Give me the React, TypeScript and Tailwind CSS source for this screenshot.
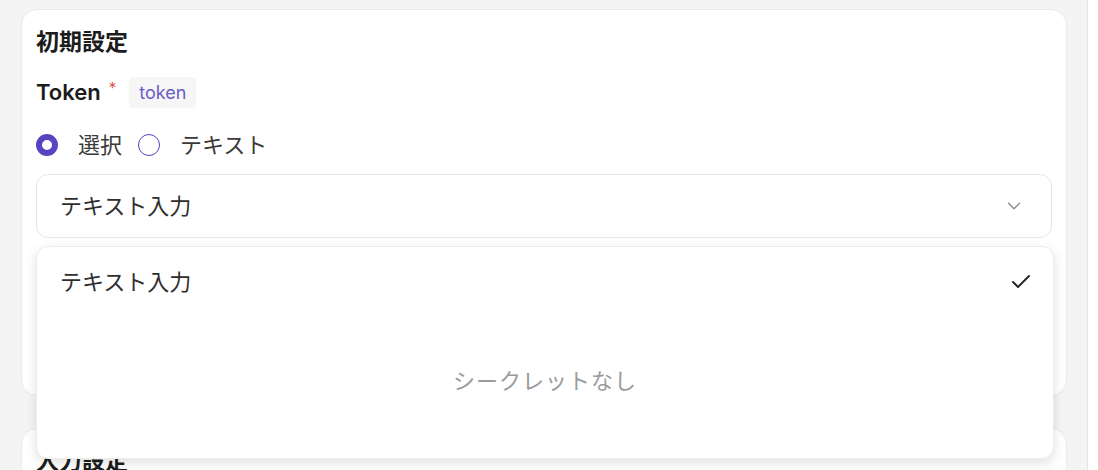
import { Check, ChevronDown } from 'lucide-react';

const font = { fontFamily: 'Inter, "Noto Sans CJK JP", sans-serif' };

function Radio({ checked, label }: { checked: boolean; label: string }) {
  return (
    <label className="flex items-center gap-[20px]">
      <span
        className={`w-[22px] h-[22px] rounded-full shrink-0 ${
          checked ? 'border-[6px] border-[#5a43c2] bg-white' : 'border-[1.5px] border-[#5a43c2] bg-white'
        }`}
      />
      <span className="text-[22px] text-[#3a3a3a]">{label}</span>
    </label>
  );
}

export default function App() {
  return (
    <div className="h-[470px] w-[1098px] overflow-hidden flex bg-white" style={font}>
      <div className="flex-1 bg-[#f4f4f4] pl-[21px] pr-[20px] pt-[9px] flex flex-col gap-[32px]">
        {/* 初期設定 card */}
        <div className="relative shrink-0 bg-white border border-[#ebebeb] rounded-[16px] h-[387px] px-[14px] pt-[16px]">
          <h2 className="text-[23px] font-bold text-[#1c1c1c] leading-[32px]">初期設定</h2>

          <div className="mt-[19px] flex items-center h-[31px]">
            <span className="text-[22px] font-semibold text-[#1c1c1c]">Token</span>
            <span className="ml-[8px] text-[15px] text-[#e0574f] -mt-[8px]">*</span>
            <span className="ml-[13px] px-[10px] h-[31px] flex items-center rounded-[4px] bg-[#f6f6f7] text-[18px] text-[#6a5cc8]">
              token
            </span>
          </div>

          <div className="mt-[25px] flex items-center gap-[16px] h-[24px]">
            <Radio checked label="選択" />
            <Radio checked={false} label="テキスト" />
          </div>

          <div className="mt-[17px] h-[64px] border border-[#e6e6e6] rounded-[12px] flex items-center justify-between pl-[23px] pr-[26px]">
            <span className="text-[22px] text-[#2e2e2e]">テキスト入力</span>
            <ChevronDown className="w-[22px] h-[22px] text-[#8c8c8c]" strokeWidth={1.5} />
          </div>

          {/* dropdown menu */}
          <div className="absolute left-[14px] right-[12px] top-[236px] h-[213px] z-10 bg-white border border-[#ececec] rounded-[12px] shadow-[0_4px_12px_rgba(0,0,0,0.12)] flex flex-col">
            <div className="h-[70px] flex items-center justify-between pl-[23px] pr-[20px]">
              <span className="text-[22px] text-[#2e2e2e]">テキスト入力</span>
              <Check className="w-[24px] h-[24px] text-[#2a2a2a]" strokeWidth={2} />
            </div>
            <div className="flex-1 flex items-center justify-center pb-[12px]">
              <span className="text-[22px] text-[#9b9b9b] tracking-[1px]">シークレットなし</span>
            </div>
          </div>
        </div>

        {/* 入力設定 card */}
        <div className="shrink-0 bg-white border border-[#ebebeb] rounded-[16px] h-[200px] px-[14px] pt-[16px]">
          <h2 className="text-[23px] font-bold text-[#1c1c1c] leading-[32px]">入力設定</h2>
        </div>
      </div>
      <div className="w-[11px] border-l border-[#e4e4e4] bg-white" />
    </div>
  );
}
